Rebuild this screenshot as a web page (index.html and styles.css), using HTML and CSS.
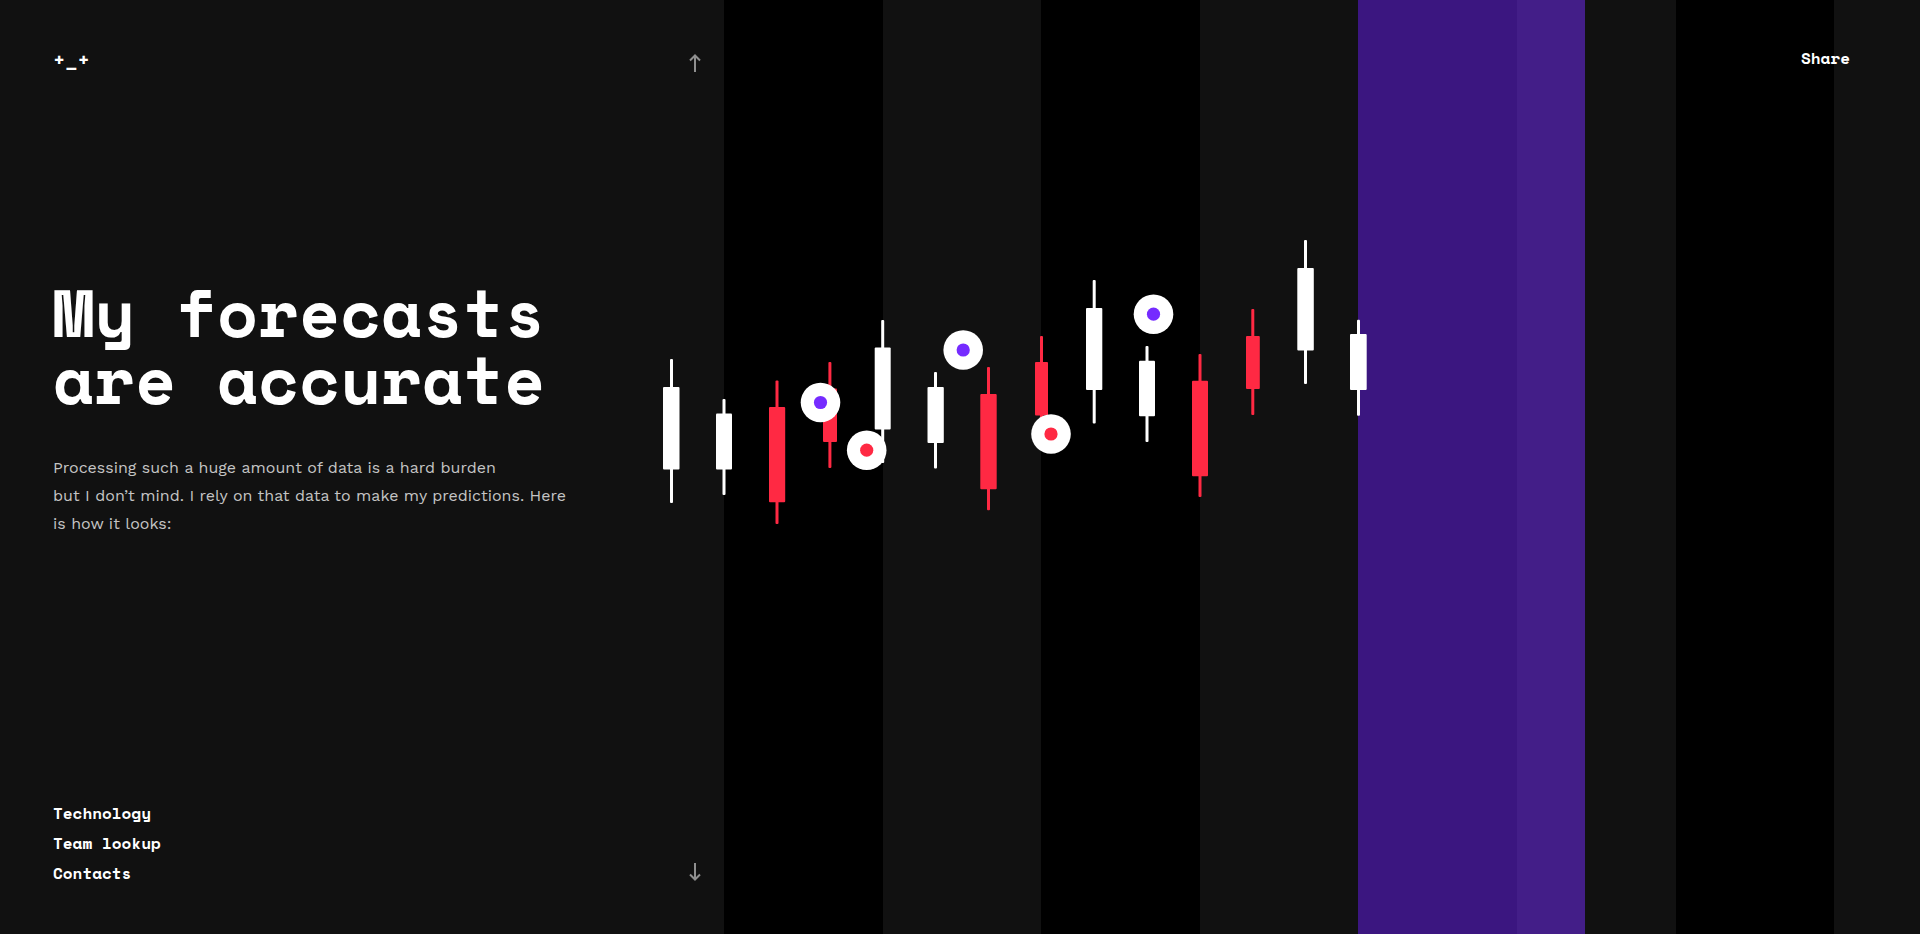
FILE: index.html
```html
<!DOCTYPE html>
<html lang="en">
<head>
<meta charset="utf-8">
<meta name="viewport" content="width=device-width, initial-scale=1">
<title>My forecasts are accurate</title>
<link rel="stylesheet" href="styles.css">
</head>
<body>
<div class="page">
  <div class="stripes" aria-hidden="true">
    <div class="stripe"></div>
    <div class="stripe stripe-dark"></div>
    <div class="stripe"></div>
    <div class="stripe stripe-dark"></div>
    <div class="stripe"></div>
    <div class="stripe stripe-dark"><div class="forecast"></div></div>
    <div class="stripe"><div class="forecast forecast-end"></div></div>
    <div class="stripe stripe-dark"></div>
    <div class="stripe"></div>
  </div>

  <svg class="chart" viewBox="660 230 710 300" role="img" aria-label="Candlestick chart with predictions">
    <g class="up">
      <rect x="670" y="358" width="3" height="144" rx="1"/><rect x="663" y="386" width="16.500" height="82.500" rx="1"/>
      <rect x="722.500" y="398" width="3" height="96" rx="1"/><rect x="716" y="412.500" width="16" height="56" rx="1"/>
      <rect x="881.200" y="319" width="3" height="143" rx="1"/><rect x="874.700" y="346.500" width="16" height="82" rx="1"/>
      <rect x="934" y="371" width="3" height="96.500" rx="1"/><rect x="927.500" y="386" width="16.300" height="56" rx="1"/>
      <rect x="1092.700" y="279" width="3" height="143.500" rx="1"/><rect x="1086" y="307" width="16.300" height="82" rx="1"/>
      <rect x="1145.500" y="345" width="3" height="96" rx="1"/><rect x="1139" y="359.700" width="16" height="55.600" rx="1"/>
      <rect x="1304" y="239" width="3" height="144" rx="1"/><rect x="1297.300" y="267" width="16.500" height="82.500" rx="1"/>
      <rect x="1357" y="318.700" width="3" height="96" rx="1"/><rect x="1350" y="333" width="16.700" height="56" rx="1"/>
    </g>
    <g class="down">
      <rect x="775.500" y="379.500" width="3" height="143.500" rx="1"/><rect x="769" y="406" width="16.200" height="95.300" rx="1"/>
      <rect x="828.400" y="361" width="3" height="106" rx="1"/><rect x="823" y="387.500" width="14" height="53.500" rx="1"/>
      <rect x="987" y="366" width="3" height="143.300" rx="1"/><rect x="980.300" y="393" width="16.400" height="95.300" rx="1"/>
      <rect x="1040" y="335" width="3" height="106" rx="1"/><rect x="1035" y="361" width="13" height="53.500" rx="1"/>
      <rect x="1198.500" y="353" width="3" height="143" rx="1"/><rect x="1192" y="379.700" width="16" height="95.500" rx="1"/>
      <rect x="1251.300" y="308" width="3" height="106" rx="1"/><rect x="1246" y="335" width="13.800" height="53" rx="1"/>
    </g>
    <g class="marker">
      <circle cx="820.500" cy="401.500" r="19.800"/>
      <circle cx="866.700" cy="449.200" r="19.800"/>
      <circle cx="963.200" cy="349" r="19.800"/>
      <circle cx="1051" cy="433" r="19.800"/>
      <circle cx="1153.500" cy="313.200" r="19.800"/>
    </g>
    <g class="rise">
      <circle cx="820.500" cy="401.500" r="6.600"/>
      <circle cx="963.200" cy="349" r="6.600"/>
      <circle cx="1153.500" cy="313.200" r="6.600"/>
    </g>
    <g class="down">
      <circle cx="866.700" cy="449.200" r="6.600"/>
      <circle cx="1051" cy="433" r="6.600"/>
    </g>
  </svg>

  <header class="top">
    <a class="logo" href="#">+_+</a>
    <button class="arrow" type="button" aria-label="Previous section">
      <svg width="12" height="18" viewBox="0 0 12 18"><path d="M6 18V1.500M1 6.500l5-5 5 5"/></svg>
    </button>
    <button class="share" type="button">Share</button>
  </header>

  <main class="intro">
    <h1>My forecasts are accurate</h1>
    <p>Processing such a huge amount of data is a hard burden<br>but I don’t mind. I rely on that data to make my predictions. Here is how it looks:</p>
  </main>

  <footer class="bottom">
    <nav class="links">
      <a href="#">Technology</a>
      <a href="#">Team lookup</a>
      <a href="#">Contacts</a>
    </nav>
    <button class="arrow arrow-next" type="button" aria-label="Next section">
      <svg width="12" height="18" viewBox="0 0 12 18"><path d="M6 0v16.500M1 11.500l5 5 5-5"/></svg>
    </button>
  </footer>
</div>
</body>
</html>
```
FILE: styles.css
```css
* {
  box-sizing: border-box;
}

body {
  margin: 0;
  background: #111;
  color: #fff;
  font-family: "Space Mono", "DejaVu Sans Mono", monospace;
  font-size: 16px;
  font-weight: 700;
}

a {
  color: inherit;
  text-decoration: none;
}

button {
  padding: 0;
  border: 0;
  background: none;
  color: inherit;
  font: inherit;
  cursor: pointer;
}

.page {
  position: relative;
  display: grid;
  grid-template-rows: auto 1fr auto;
  min-height: 100vh;
  padding: 46px 70px 46px 53px;
}

.stripes {
  position: absolute;
  inset: 0;
  display: grid;
  grid-template-columns: 7240fr repeat(7, 1586fr) 858fr;
}

.stripe {
  background: #111;
}

.stripe-dark {
  background: #000;
}

.forecast {
  height: 100%;
  background: rgba(117, 43, 255, 0.5);
}

.forecast-end {
  width: 43%;
}

.chart {
  position: absolute;
  top: 231px;
  left: calc(100% * 660 / 1920);
  width: calc(100% * 710 / 1920);
}

.up,
.marker {
  fill: #fff;
}

.down {
  fill: #ff2943;
}

.rise {
  fill: #752bff;
}

.top,
.bottom,
.intro {
  position: relative;
}

.top,
.bottom {
  display: grid;
  grid-template-columns: 636px 12px 1fr;
  align-items: start;
}

.logo {
  justify-self: start;
  font-size: 20px;
  line-height: 28px;
}

.share {
  justify-self: end;
  line-height: 24px;
}

.arrow {
  height: 18px;
  margin-top: 8px;
}

.arrow-next {
  align-self: end;
  margin: 0 0 7px;
}

.arrow svg {
  display: block;
  fill: none;
  stroke: #8f8f8f;
  stroke-width: 2;
}

.intro {
  padding-top: 204px;
}

h1 {
  width: 530px;
  margin: 0;
  font-size: 67px;
  line-height: 67px;
}

.intro p {
  width: 530px;
  margin: 42px 0 0;
  color: #c4c4c4;
  font-family: "Work Sans", "Noto Sans", sans-serif;
  font-size: 16px;
  font-weight: 400;
  line-height: 28px;
}

.links {
  display: grid;
  justify-items: start;
  line-height: 30px;
}
```
